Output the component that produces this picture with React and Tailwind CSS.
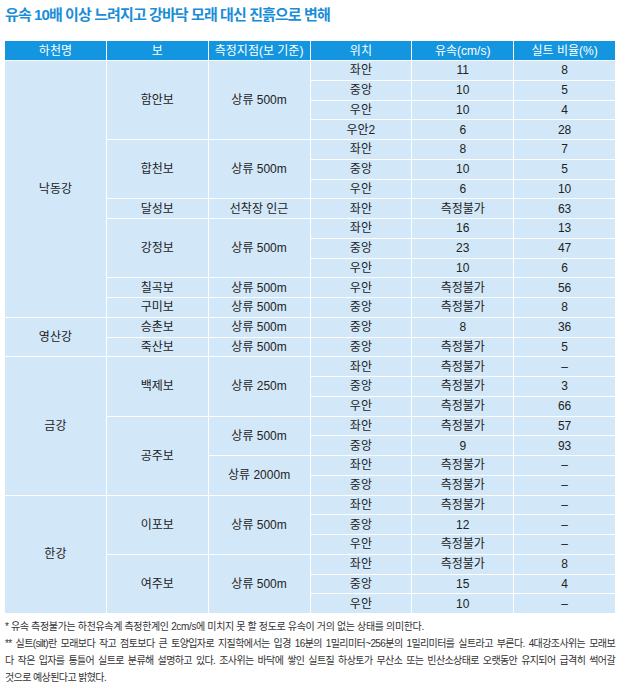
const rows = [
  { river: ["낙동강", "row-span-13"], weir: ["함안보", "row-span-4"], point: ["상류 500m", "row-span-4"], data: ["좌안", "11", "8"] },
  { data: ["중앙", "10", "5"] },
  { data: ["우안", "10", "4"] },
  { data: ["우안2", "6", "28"] },
  { weir: ["합천보", "row-span-3"], point: ["상류 500m", "row-span-3"], data: ["좌안", "8", "7"] },
  { data: ["중앙", "10", "5"] },
  { data: ["우안", "6", "10"] },
  { weir: ["달성보", "row-span-1"], point: ["선착장 인근", "row-span-1"], data: ["좌안", "측정불가", "63"] },
  { weir: ["강정보", "row-span-3"], point: ["상류 500m", "row-span-3"], data: ["좌안", "16", "13"] },
  { data: ["중앙", "23", "47"] },
  { data: ["우안", "10", "6"] },
  { weir: ["칠곡보", "row-span-1"], point: ["상류 500m", "row-span-1"], data: ["우안", "측정불가", "56"] },
  { weir: ["구미보", "row-span-1"], point: ["상류 500m", "row-span-1"], data: ["중앙", "측정불가", "8"] },
  { river: ["영산강", "row-span-2"], weir: ["승촌보", "row-span-1"], point: ["상류 500m", "row-span-1"], data: ["중앙", "8", "36"] },
  { weir: ["죽산보", "row-span-1"], point: ["상류 500m", "row-span-1"], data: ["중앙", "측정불가", "5"] },
  { river: ["금강", "row-span-7"], weir: ["백제보", "row-span-3"], point: ["상류 250m", "row-span-3"], data: ["좌안", "측정불가", "–"] },
  { data: ["중앙", "측정불가", "3"] },
  { data: ["우안", "측정불가", "66"] },
  { weir: ["공주보", "row-span-4"], point: ["상류 500m", "row-span-2"], data: ["좌안", "측정불가", "57"] },
  { data: ["중앙", "9", "93"] },
  { point: ["상류 2000m", "row-span-2"], data: ["좌안", "측정불가", "–"] },
  { data: ["중앙", "측정불가", "–"] },
  { river: ["한강", "row-span-6"], weir: ["이포보", "row-span-3"], point: ["상류 500m", "row-span-3"], data: ["좌안", "측정불가", "–"] },
  { data: ["중앙", "12", "–"] },
  { data: ["우안", "측정불가", "–"] },
  { weir: ["여주보", "row-span-3"], point: ["상류 500m", "row-span-3"], data: ["좌안", "측정불가", "8"] },
  { data: ["중앙", "15", "4"] },
  { data: ["우안", "10", "–"] },
];

const headers = ["하천명", "보", "측정지점(보 기준)", "위치", "유속(cm/s)", "실트 비율(%)"];

const Cell = ({ children, span = "" }) => (
  <div className={`${span} flex items-center justify-center bg-[#d2e8f9] text-[12px] text-[#222]`}>
    {children}
  </div>
);

export default function App() {
  const cells = [];
  rows.forEach((r, i) => {
    if (r.river) cells.push(<Cell key={`r${i}`} span={r.river[1]}>{r.river[0]}</Cell>);
    if (r.weir) cells.push(<Cell key={`w${i}`} span={r.weir[1]}>{r.weir[0]}</Cell>);
    if (r.point) cells.push(<Cell key={`p${i}`} span={r.point[1]}>{r.point[0]}</Cell>);
    r.data.forEach((d, j) => cells.push(<Cell key={`d${i}-${j}`}>{d}</Cell>));
  });

  return (
    <div
      className="w-[620px] h-[689px] bg-white px-[5px] pt-[6px]"
      style={{ fontFamily: '"Liberation Sans", "Noto Sans CJK KR", sans-serif' }}
    >
      <h1 className="text-[15px] leading-[18px] font-bold tracking-[-0.06em] text-[#1a8dd8]">
        유속 10배 이상 느려지고 강바닥 모래 대신 진흙으로 변해
      </h1>

      <div className="mt-[17px] grid grid-cols-6 grid-rows-[19px_repeat(28,18.75px)] gap-px bg-white">
        {headers.map((h) => (
          <div key={h} className="flex items-center justify-center bg-[#1396df] text-[12px] text-white">
            {h}
          </div>
        ))}
        {cells}
      </div>

      <div className="mt-[5px] text-[10px] leading-[17px] tracking-[-0.06em] text-[#333]">
        <p className="tracking-[-0.035em]">* 유속 측정불가는 하천유속계 측정한계인 2cm/s에 미치지 못 할 정도로 유속이 거의 없는 상태를 의미한다.</p>
        <p className="text-justify [text-align-last:justify]">
          ** 실트(silt)란 모래보다 작고 점토보다 큰 토양입자로 지질학에서는 입경 16분의 1밀리미터~256분의 1밀리미터를 실트라고 부른다. 4대강조사위는 모래보
        </p>
        <p className="text-justify [text-align-last:justify]">
          다 작은 입자를 통틀어 실트로 분류해 설명하고 있다. 조사위는 바닥에 쌓인 실트질 하상토가 무산소 또는 빈산소상태로 오랫동안 유지되어 급격히 썩어갈
        </p>
        <p>것으로 예상된다고 밝혔다.</p>
      </div>
    </div>
  );
}
